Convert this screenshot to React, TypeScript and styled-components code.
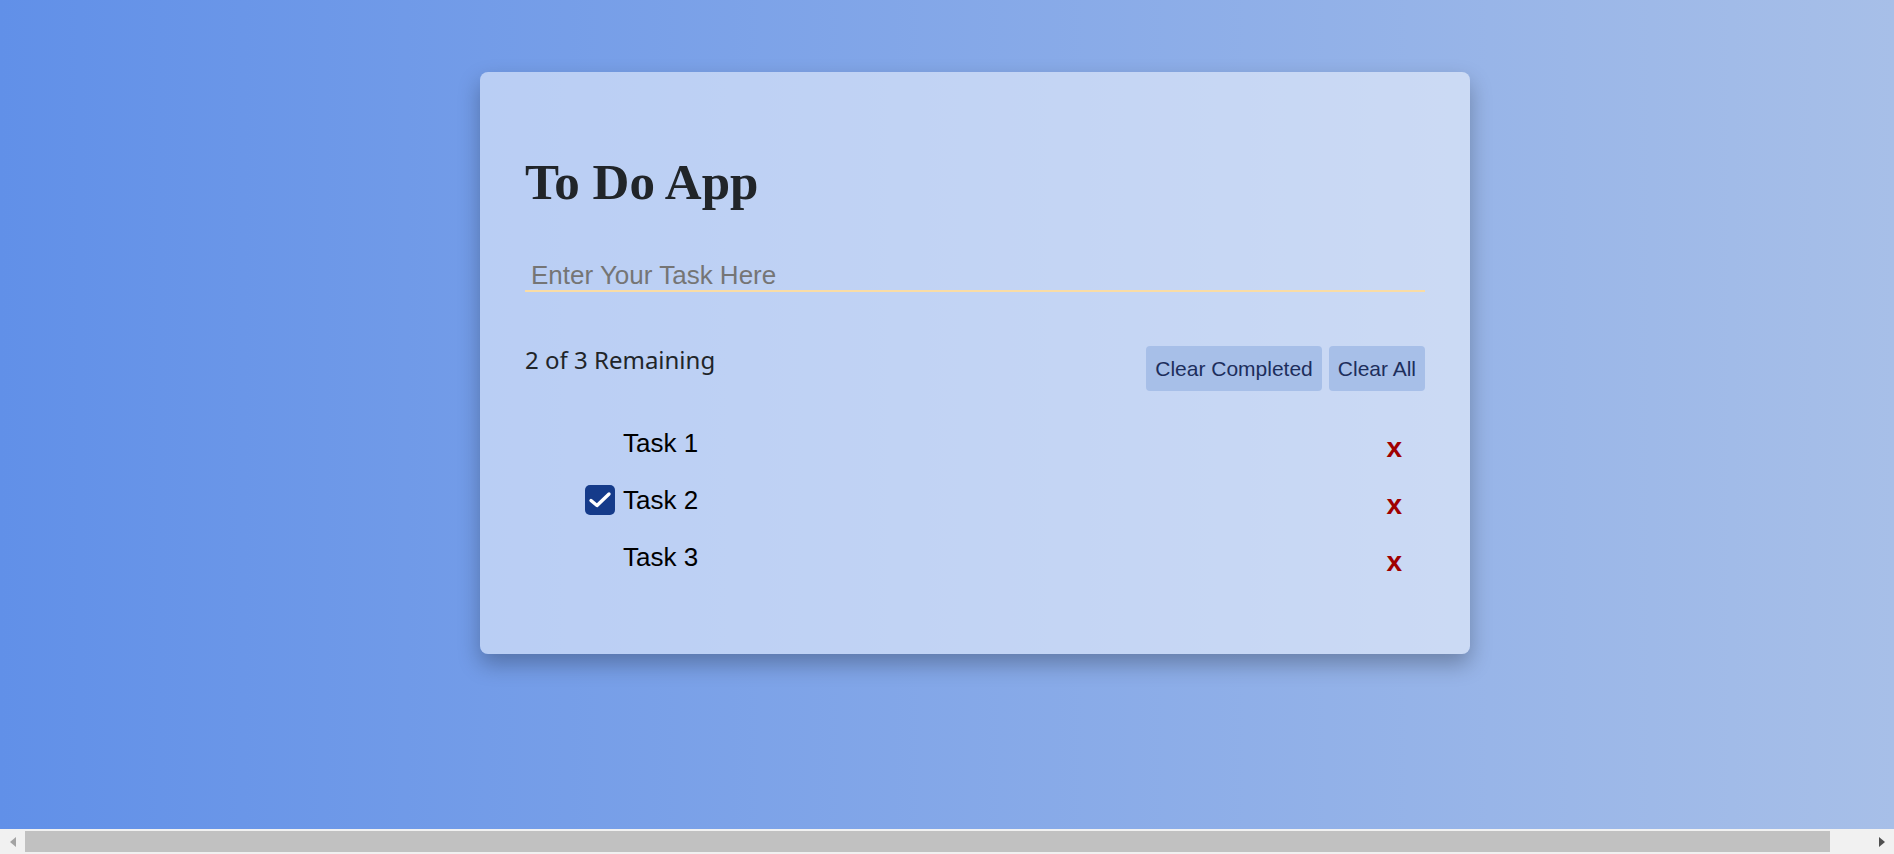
import React, { useState } from "react";
import styled, { createGlobalStyle } from "styled-components";

const GlobalStyle = createGlobalStyle`
  html, body {
    margin: 0;
    height: 100%;
    overflow: hidden;
  }
  body {
    background: linear-gradient(to right, #6190e8, #a7bfe8);
    font-family: "Noto Sans", Arial, sans-serif;
    color: #212529;
  }
  #root {
    height: 100%;
  }
`;

const Shell = styled.div`
  display: grid;
  grid-template-rows: 1fr 25px;
  height: 100vh;
`;

const Page = styled.main`
  box-sizing: border-box;
  padding: 72px 0 0 56px;
  display: flex;
  justify-content: center;
  align-items: flex-start;
  min-height: 0;
`;

const Card = styled.section`
  box-sizing: border-box;
  width: 990px;
  padding: 45px 45px 69px;
  background: rgba(255, 255, 255, 0.5);
  border-radius: 8px;
  box-shadow: 0 10px 22px rgba(0, 0, 0, 0.28);
`;

const Title = styled.h1`
  margin: 36px 0 0;
  font-family: "Liberation Serif", "Times New Roman", serif;
  font-weight: 700;
  font-size: 51px;
  line-height: 59px;
  color: #212529;
`;

const TaskInput = styled.input`
  display: block;
  box-sizing: border-box;
  width: 100%;
  height: 32px;
  margin-top: 48px;
  padding: 0 6px;
  border: none;
  border-bottom: 2px solid #f9dca5;
  background: transparent;
  outline: none;
  font-family: "Liberation Sans", Arial, sans-serif;
  font-size: 26px;
  line-height: 30px;
  color: #212529;
  &::placeholder {
    color: #757575;
  }
`;

const StatusRow = styled.div`
  display: flex;
  justify-content: space-between;
  align-items: flex-start;
  margin-top: 54px;
`;

const Remaining = styled.p`
  margin: 0;
  font-family: "Noto Sans", "Open Sans", sans-serif;
  font-size: 24px;
  line-height: 1.2;
  color: #212529;
`;

const ButtonGroup = styled.div`
  display: flex;
  gap: 7px;
`;

const ActionButton = styled.button`
  height: 45px;
  padding: 10px 9px;
  border: none;
  border-radius: 4px;
  background: #a7bfe8;
  color: #1d2e5c;
  font-family: "Liberation Sans", Arial, sans-serif;
  font-size: 21px;
  line-height: 25px;
  cursor: pointer;
`;

const TaskList = styled.ul`
  list-style: none;
  margin: 23px 0 0;
  padding: 0 0 0 60px;
`;

const TaskRow = styled.li`
  display: flex;
  align-items: center;
  gap: 8px;
  height: 57px;
  padding-right: 23px;
`;

const CheckBox = styled.span<{ $checked: boolean }>`
  display: inline-flex;
  align-items: center;
  justify-content: center;
  flex: none;
  width: 30px;
  height: 30px;
  border-radius: 5px;
  background: ${(p) => (p.$checked ? "#153b8a" : "transparent")};
  cursor: pointer;
  svg {
    display: ${(p) => (p.$checked ? "block" : "none")};
  }
`;

const TaskText = styled.span`
  flex: 1;
  font-family: "Liberation Sans", Arial, sans-serif;
  font-size: 26px;
  line-height: 30px;
  color: #000;
`;

const DeleteButton = styled.button`
  padding: 11px 0 0;
  border: none;
  background: none;
  color: #a00000;
  font-family: "Liberation Sans", Arial, sans-serif;
  font-weight: 700;
  font-size: 28px;
  line-height: 32px;
  cursor: pointer;
`;

const ScrollBar = styled.div`
  display: grid;
  grid-template-columns: 25px 1fr 25px;
  background: #f1f1f1;
`;

const ScrollArrow = styled.div<{ $dir: "left" | "right"; $active: boolean }>`
  display: flex;
  align-items: center;
  justify-content: center;
  &::before {
    content: "";
    width: 0;
    height: 0;
    border-top: 5px solid transparent;
    border-bottom: 5px solid transparent;
    ${(p) =>
      p.$dir === "left"
        ? `border-right: 6px solid ${p.$active ? "#505050" : "#a3a3a3"};`
        : `border-left: 6px solid ${p.$active ? "#505050" : "#a3a3a3"};`}
  }
`;

const ScrollTrack = styled.div`
  display: flex;
  padding: 2px 39px 2px 0;
`;

const ScrollThumb = styled.div`
  flex: 1;
  background: #c1c1c1;
`;

type Task = { id: number; text: string; done: boolean };

export default function App() {
  const [tasks, setTasks] = useState<Task[]>([
    { id: 1, text: "Task 1", done: false },
    { id: 2, text: "Task 2", done: true },
    { id: 3, text: "Task 3", done: false },
  ]);
  const remaining = tasks.filter((t) => !t.done).length;

  const toggle = (id: number) =>
    setTasks((ts) => ts.map((t) => (t.id === id ? { ...t, done: !t.done } : t)));
  const remove = (id: number) => setTasks((ts) => ts.filter((t) => t.id !== id));

  return (
    <>
      <GlobalStyle />
      <Shell>
        <Page>
          <Card>
            <Title>To Do App</Title>
            <TaskInput placeholder="Enter Your Task Here" />
            <StatusRow>
              <Remaining>
                {remaining} of {tasks.length} Remaining
              </Remaining>
              <ButtonGroup>
                <ActionButton onClick={() => setTasks((ts) => ts.filter((t) => !t.done))}>
                  Clear Completed
                </ActionButton>
                <ActionButton onClick={() => setTasks([])}>Clear All</ActionButton>
              </ButtonGroup>
            </StatusRow>
            <TaskList>
              {tasks.map((t) => (
                <TaskRow key={t.id}>
                  <CheckBox $checked={t.done} onClick={() => toggle(t.id)}>
                    <svg width="30" height="30" viewBox="0 0 30 30">
                      <path
                        d="M6 15.5 L12 20.5 L24 9"
                        fill="none"
                        stroke="#fff"
                        strokeWidth="3.4"
                        strokeLinecap="round"
                        strokeLinejoin="round"
                      />
                    </svg>
                  </CheckBox>
                  <TaskText>{t.text}</TaskText>
                  <DeleteButton onClick={() => remove(t.id)}>x</DeleteButton>
                </TaskRow>
              ))}
            </TaskList>
          </Card>
        </Page>
        <ScrollBar aria-hidden="true">
          <ScrollArrow $dir="left" $active={false} />
          <ScrollTrack>
            <ScrollThumb />
          </ScrollTrack>
          <ScrollArrow $dir="right" $active={true} />
        </ScrollBar>
      </Shell>
    </>
  );
}
